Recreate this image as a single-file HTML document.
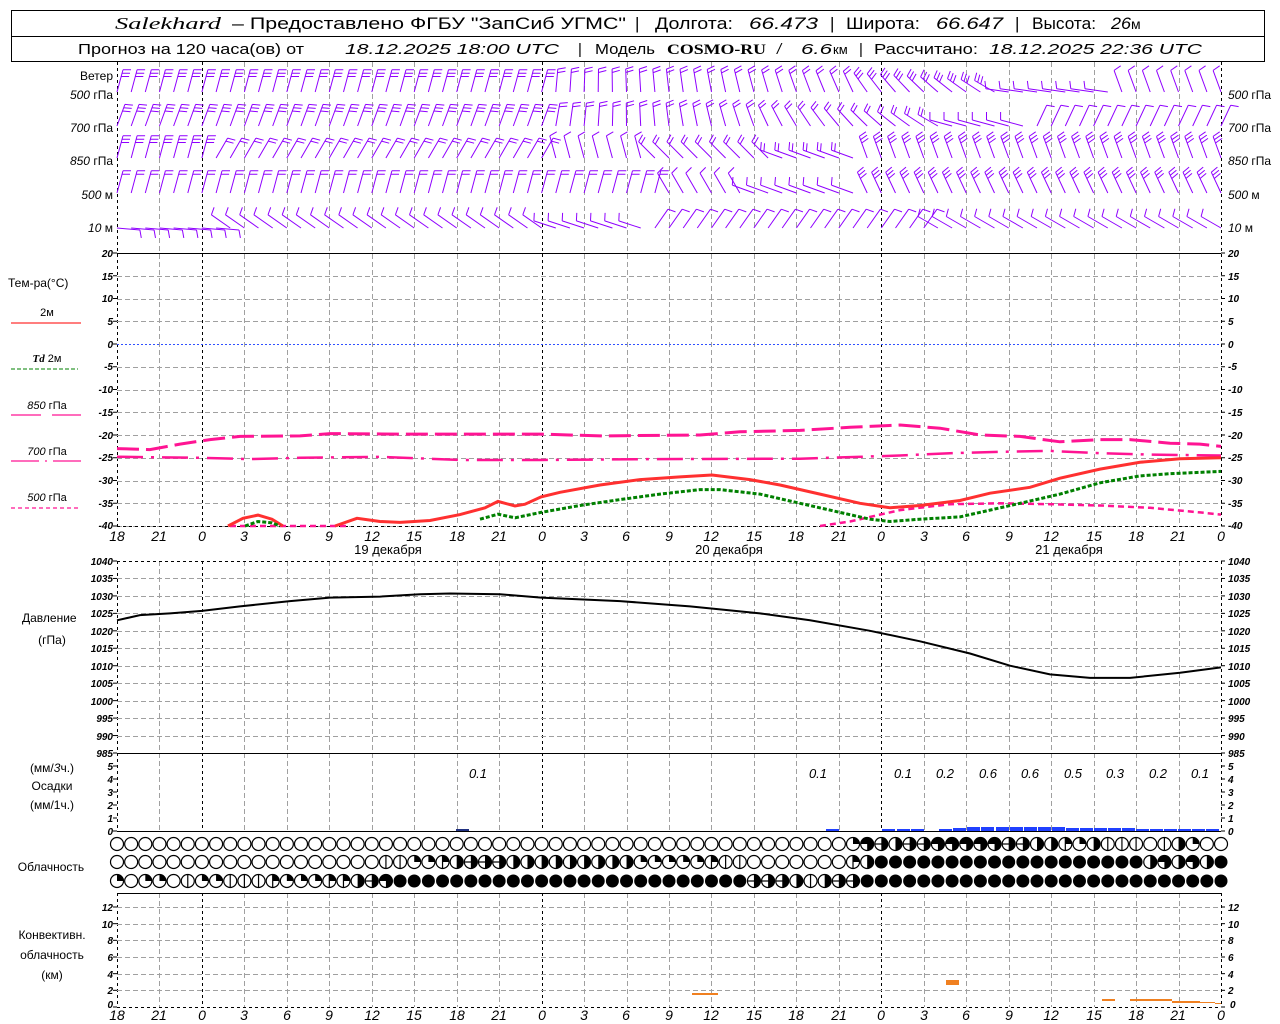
<!DOCTYPE html>
<html><head><meta charset="utf-8">
<style>
html,body{margin:0;padding:0;background:#fff;}
svg{display:block;}
text{font-family:"Liberation Sans","DejaVu Sans",sans-serif;fill:#000;}
.i{font-style:italic;}
.ax{font-size:10px;font-style:italic;font-weight:bold;}
.lb{font-size:12px;}
</style></head>
<body>
<svg id="s" width="1280" height="1024" viewBox="0 0 1280 1024" xmlns="http://www.w3.org/2000/svg">
<rect x="0" y="0" width="1280" height="1024" fill="#fff"/>
<rect x="11.5" y="10.5" width="1253" height="51" fill="none" stroke="#000"/>
<line x1="11" y1="36.5" x2="1265" y2="36.5" stroke="#000"/>
<g font-size="17">
<text x="115" y="29" textLength="106" lengthAdjust="spacingAndGlyphs" style="font-family:'Liberation Serif',serif;font-style:italic">Salekhard</text>
<text x="232" y="29" textLength="394" lengthAdjust="spacingAndGlyphs">– Предоставлено ФГБУ "ЗапСиб УГМС"</text>
<text x="635" y="29">|</text>
<text x="655" y="29" textLength="78" lengthAdjust="spacingAndGlyphs">Долгота:</text>
<text x="749" y="29" class="i" textLength="69" lengthAdjust="spacingAndGlyphs">66.473</text>
<text x="830" y="29">|</text>
<text x="846" y="29" textLength="74" lengthAdjust="spacingAndGlyphs">Широта:</text>
<text x="936" y="29" class="i" textLength="67" lengthAdjust="spacingAndGlyphs">66.647</text>
<text x="1015" y="29">|</text>
<text x="1032" y="29" textLength="64" lengthAdjust="spacingAndGlyphs">Высота:</text>
<text x="1111" y="29" class="i" textLength="20" lengthAdjust="spacingAndGlyphs">26</text>
<text x="1131" y="29" font-size="14">м</text>
</g>
<g font-size="15">
<text x="78" y="54" textLength="226" lengthAdjust="spacingAndGlyphs">Прогноз на 120 часа(ов) от</text>
<text x="345" y="54" class="i" textLength="214" lengthAdjust="spacingAndGlyphs">18.12.2025 18:00 UTC</text>
<text x="578" y="54">|</text>
<text x="595" y="54" textLength="60" lengthAdjust="spacingAndGlyphs">Модель</text>
<text x="667" y="54" textLength="99" lengthAdjust="spacingAndGlyphs" style="font-family:'Liberation Serif',serif;font-weight:bold">COSMO-RU</text>
<text x="777" y="54" class="i">/</text>
<text x="801" y="54" class="i" textLength="31" lengthAdjust="spacingAndGlyphs">6.6</text>
<text x="833" y="54" font-size="13">км</text>
<text x="859" y="54">|</text>
<text x="874" y="54" textLength="104" lengthAdjust="spacingAndGlyphs">Рассчитано:</text>
<text x="989" y="54" class="i" textLength="213" lengthAdjust="spacingAndGlyphs">18.12.2025 22:36 UTC</text>
</g>
<g id="gfx"></g>
<g class="lb" font-size="11">
<text x="113" y="80" text-anchor="end">Ветер</text>
<text x="113" y="99" text-anchor="end"><tspan class="i">500</tspan> гПа</text>
<text x="113" y="132" text-anchor="end"><tspan class="i">700</tspan> гПа</text>
<text x="113" y="165" text-anchor="end"><tspan class="i">850</tspan> гПа</text>
<text x="113" y="199" text-anchor="end"><tspan class="i">500</tspan> м</text>
<text x="113" y="232" text-anchor="end"><tspan class="i">10</tspan>  м</text>
<text x="1228" y="99"><tspan class="i">500</tspan> гПа</text>
<text x="1228" y="132"><tspan class="i">700</tspan> гПа</text>
<text x="1228" y="165"><tspan class="i">850</tspan> гПа</text>
<text x="1228" y="199"><tspan class="i">500</tspan> м</text>
<text x="1228" y="232"><tspan class="i">10</tspan>   м</text>
</g>
<g font-size="12">
<text x="8" y="287">Тем-ра(°С)</text>
<text x="47" y="316" text-anchor="middle" font-size="11">2м</text>
<text x="47" y="362" text-anchor="middle" font-size="11"><tspan class="i" font-weight="bold" style="font-family:'Liberation Serif',serif">Td</tspan>  2м</text>
<text x="47" y="409" text-anchor="middle" font-size="11"><tspan class="i">850</tspan> гПа</text>
<text x="47" y="455" text-anchor="middle" font-size="11"><tspan class="i">700</tspan> гПа</text>
<text x="47" y="501" text-anchor="middle" font-size="11"><tspan class="i">500</tspan> гПа</text>
</g>
<line x1="11" y1="323" x2="81" y2="323" stroke="#ff3030" stroke-width="1.2"/>
<line x1="11" y1="369" x2="78" y2="369" stroke="#008000" stroke-dasharray="4,2"/>
<line x1="11" y1="415" x2="41" y2="415" stroke="#ff1493" stroke-width="1.2"/>
<line x1="52" y1="415" x2="81" y2="415" stroke="#ff1493" stroke-width="1.2"/>
<line x1="11" y1="461" x2="81" y2="461" stroke="#ff1493" stroke-dasharray="28,6,2,6" stroke-width="1.2"/>
<line x1="11" y1="508" x2="78" y2="508" stroke="#ff1493" stroke-dasharray="4,3" stroke-width="1.2"/>
<g class="ax">
<text x="113" y="257" text-anchor="end">20</text><text x="113" y="280" text-anchor="end">15</text><text x="113" y="302" text-anchor="end">10</text><text x="113" y="325" text-anchor="end">5</text><text x="113" y="348" text-anchor="end">0</text><text x="113" y="370" text-anchor="end">-5</text><text x="113" y="393" text-anchor="end">-10</text><text x="113" y="416" text-anchor="end">-15</text><text x="113" y="439" text-anchor="end">-20</text><text x="113" y="461" text-anchor="end">-25</text><text x="113" y="484" text-anchor="end">-30</text><text x="113" y="507" text-anchor="end">-35</text><text x="113" y="529" text-anchor="end">-40</text>
<text x="1228" y="257">20</text><text x="1228" y="280">15</text><text x="1228" y="302">10</text><text x="1228" y="325">5</text><text x="1228" y="348">0</text><text x="1228" y="370">-5</text><text x="1228" y="393">-10</text><text x="1228" y="416">-15</text><text x="1228" y="439">-20</text><text x="1228" y="461">-25</text><text x="1228" y="484">-30</text><text x="1228" y="507">-35</text><text x="1228" y="529">-40</text>
</g>
<g class="i" font-size="14" text-anchor="middle">
<text x="117" y="541">18</text><text x="159" y="541">21</text><text x="202" y="541">0</text><text x="244" y="541">3</text><text x="287" y="541">6</text><text x="329" y="541">9</text><text x="372" y="541">12</text><text x="414" y="541">15</text><text x="457" y="541">18</text><text x="499" y="541">21</text><text x="542" y="541">0</text><text x="584" y="541">3</text><text x="626" y="541">6</text><text x="669" y="541">9</text><text x="711" y="541">12</text><text x="754" y="541">15</text><text x="796" y="541">18</text><text x="839" y="541">21</text><text x="881" y="541">0</text><text x="924" y="541">3</text><text x="966" y="541">6</text><text x="1009" y="541">9</text><text x="1051" y="541">12</text><text x="1094" y="541">15</text><text x="1136" y="541">18</text><text x="1178" y="541">21</text><text x="1221" y="541">0</text>
</g>
<g font-size="13" text-anchor="middle">
<text x="388" y="554">19 декабря</text><text x="729" y="554">20 декабря</text><text x="1069" y="554">21 декабря</text>
</g>
<g font-size="12">
<text x="22" y="622">Давление</text>
<text x="52" y="644" text-anchor="middle">(гПа)</text>
</g>
<g class="ax" font-size="9">
<text x="113" y="565" text-anchor="end">1040</text><text x="113" y="582" text-anchor="end">1035</text><text x="113" y="600" text-anchor="end">1030</text><text x="113" y="617" text-anchor="end">1025</text><text x="113" y="635" text-anchor="end">1020</text><text x="113" y="652" text-anchor="end">1015</text><text x="113" y="670" text-anchor="end">1010</text><text x="113" y="687" text-anchor="end">1005</text><text x="113" y="705" text-anchor="end">1000</text><text x="113" y="722" text-anchor="end">995</text><text x="113" y="740" text-anchor="end">990</text><text x="113" y="757" text-anchor="end">985</text>
<text x="1228" y="565">1040</text><text x="1228" y="582">1035</text><text x="1228" y="600">1030</text><text x="1228" y="617">1025</text><text x="1228" y="635">1020</text><text x="1228" y="652">1015</text><text x="1228" y="670">1010</text><text x="1228" y="687">1005</text><text x="1228" y="705">1000</text><text x="1228" y="722">995</text><text x="1228" y="740">990</text><text x="1228" y="757">985</text>
</g>
<g font-size="12" text-anchor="middle">
<text x="52" y="772">(мм/<tspan class="i">3</tspan>ч.)</text>
<text x="52" y="790">Осадки</text>
<text x="52" y="809">(мм/1ч.)</text>
<text x="51" y="871">Облачность</text>
<text x="52" y="939">Конвективн.</text>
<text x="52" y="959">облачность</text>
<text x="52" y="979">(км)</text>
</g>
<g class="ax" font-size="9">
<text x="113" y="770" text-anchor="end">5</text><text x="113" y="783" text-anchor="end">4</text><text x="113" y="796" text-anchor="end">3</text><text x="113" y="809" text-anchor="end">2</text><text x="113" y="822" text-anchor="end">1</text><text x="113" y="835" text-anchor="end">0</text>
<text x="1228" y="770">5</text><text x="1228" y="783">4</text><text x="1228" y="796">3</text><text x="1228" y="809">2</text><text x="1228" y="822">1</text><text x="1228" y="835">0</text>
<text x="113" y="911" text-anchor="end">12</text><text x="113" y="928" text-anchor="end">10</text><text x="113" y="944" text-anchor="end">8</text><text x="113" y="961" text-anchor="end">6</text><text x="113" y="978" text-anchor="end">4</text><text x="113" y="994" text-anchor="end">2</text><text x="113" y="1008" text-anchor="end">0</text>
<text x="1228" y="911">12</text><text x="1228" y="928">10</text><text x="1228" y="944">8</text><text x="1228" y="961">6</text><text x="1228" y="978">4</text><text x="1228" y="994">2</text><text x="1230" y="1008">0</text>
</g>
<g class="i" font-size="13" text-anchor="middle">
<text x="478" y="778">0.1</text><text x="818" y="778">0.1</text><text x="903" y="778">0.1</text><text x="945" y="778">0.2</text><text x="988" y="778">0.6</text><text x="1030" y="778">0.6</text><text x="1073" y="778">0.5</text><text x="1115" y="778">0.3</text><text x="1158" y="778">0.2</text><text x="1200" y="778">0.1</text>
</g>
<g class="i" font-size="14" text-anchor="middle">
<text x="117" y="1020">18</text><text x="159" y="1020">21</text><text x="202" y="1020">0</text><text x="244" y="1020">3</text><text x="287" y="1020">6</text><text x="329" y="1020">9</text><text x="372" y="1020">12</text><text x="414" y="1020">15</text><text x="457" y="1020">18</text><text x="499" y="1020">21</text><text x="542" y="1020">0</text><text x="584" y="1020">3</text><text x="626" y="1020">6</text><text x="669" y="1020">9</text><text x="711" y="1020">12</text><text x="754" y="1020">15</text><text x="796" y="1020">18</text><text x="839" y="1020">21</text><text x="881" y="1020">0</text><text x="924" y="1020">3</text><text x="966" y="1020">6</text><text x="1009" y="1020">9</text><text x="1051" y="1020">12</text><text x="1094" y="1020">15</text><text x="1136" y="1020">18</text><text x="1178" y="1020">21</text><text x="1221" y="1020">0</text>
</g>
</svg>
<script>
(function(){
var g=document.getElementById("gfx"),h="";
function X(k){return 117+k*42.4615;}
function ln(x1,y1,x2,y2,st){h+='<line x1="'+x1+'" y1="'+y1+'" x2="'+x2+'" y2="'+y2+'" '+st+'/>';}
var GR='stroke="#a0a0a0" stroke-dasharray="5,3"',BK='stroke="#000" stroke-dasharray="3,3"';
var ranges=[[62,526],[561,831],[893,1007]];
ranges.forEach(function(r){
 for(var k=0;k<=26;k++){var x=Math.round(X(k))+.5;
  var day=(k==0||k==2||k==10||k==18||k==26);
  ln(x,r[0],x,r[1],day?BK:GR);}
});
for(var k=1;k<13;k++){var y=Math.round(253+k*22.75)+.5; if(k==4)continue; ln(117,y,1221,y,GR);}
ln(117,344.5,1221,344.5,'stroke="#3050ff" stroke-dasharray="2,2"');
ln(117,526.5,1221,526.5,BK);
ln(117,253.5,1221,253.5,'stroke="#000"');
ln(117,561.5,1221,561.5,BK);
for(var k=1;k<11;k++){var y=Math.round(561+k*17.45)+.5; ln(117,y,1221,y,GR);}
ln(117,753.5,1221,753.5,'stroke="#000"');
ln(117,831.5,1221,831.5,'stroke="#000"');
ln(117,893.5,1221,893.5,'stroke="#000"');
for(var k=1;k<=6;k++){var y=Math.round(1007-k*16.67)+.5; ln(117,y,1221,y,GR);}
ln(117,1007.5,1221,1007.5,BK);
[[253,526,13],[561,753,12],[766,831,6],[907,1007,7]].forEach(function(t){
 for(var i=0;i<t[2];i++){var y=t[0]+(t[1]-t[0])*i/(t[2]-1);ln(113,y,117,y,'stroke="#000"');ln(1221,y,1225,y,'stroke="#000"');}});
function poly(pts,fy,st){var s="";pts.forEach(function(p,i){s+=(i?"L":"M")+p[0]+" "+fy(p[1]).toFixed(1);});h+='<path d="'+s+'" fill="none" '+st+'/>';}
var TY=function(t){return 344-4.55*t;};
poly([[117,-23],[150,-23.2],[180,-22],[210,-21],[240,-20.3],[300,-20.2],[330,-19.7],[400,-19.8],[540,-19.8],[600,-20.2],[700,-20],[740,-19.3],[800,-19],[850,-18.3],[900,-17.8],[940,-18.5],[980,-20],[1020,-20.3],[1060,-21.5],[1100,-21],[1130,-21],[1170,-21.8],[1200,-22],[1221,-22.5]],TY,'stroke="#ff1493" stroke-width="3" stroke-dasharray="22,7"');
poly([[117,-24.8],[200,-25],[250,-25.3],[300,-25],[380,-24.8],[460,-25.5],[540,-25.5],[650,-25.3],[800,-25.2],[900,-24.5],[950,-24],[1000,-23.7],[1050,-23.5],[1100,-24],[1150,-24.3],[1221,-24.5]],TY,'stroke="#ff1493" stroke-width="2.5" stroke-dasharray="26,8,3,8"');
poly([[230,-40],[350,-40]],TY,'stroke="#ff1493" stroke-width="2.5" stroke-dasharray="6,4"');
poly([[820,-40],[850,-39],[900,-36.5],[950,-35.2],[1000,-35],[1050,-35.2],[1100,-35.5],[1150,-36],[1200,-37],[1221,-37.5]],TY,'stroke="#ff1493" stroke-width="2.5" stroke-dasharray="6,4"');
poly([[228,-40],[243,-38.3],[258,-37.6],[272,-38.5],[283,-40]],TY,'stroke="#ff3030" stroke-width="3"');
poly([[335,-40],[357,-38.3],[380,-39],[400,-39.2],[430,-38.8],[460,-37.5],[485,-36],[498,-34.6],[515,-35.6],[525,-35.2],[541,-33.6],[560,-32.6],[600,-31],[640,-29.8],[680,-29.2],[712,-28.8],[750,-29.8],[780,-31],[820,-33],[860,-35],[890,-36],[920,-35.5],[960,-34.4],[990,-32.8],[1030,-31.5],[1060,-29.5],[1100,-27.5],[1140,-26],[1180,-25.2],[1221,-25]],TY,'stroke="#ff3030" stroke-width="3"');
poly([[245,-40],[258,-39],[272,-39.3],[280,-40]],TY,'stroke="#008000" stroke-width="3" stroke-dasharray="4,2"');
poly([[480,-38.5],[498,-37.4],[515,-38.2],[541,-37],[580,-35.5],[620,-34.2],[660,-33],[700,-32],[720,-32],[760,-33],[800,-35],[840,-37],[870,-38.5],[890,-39],[920,-38.5],[960,-38],[990,-36.5],[1020,-35],[1060,-33],[1100,-30.5],[1140,-29],[1170,-28.5],[1221,-28]],TY,'stroke="#008000" stroke-width="3" stroke-dasharray="4,2"');
var PY=function(p){return 561+(1040-p)*3.49;};
poly([[117,1023],[140,1024.5],[170,1025],[202,1025.7],[240,1027],[290,1028.5],[330,1029.5],[380,1029.8],[420,1030.5],[450,1030.7],[500,1030.5],[541,1029.5],[620,1028.5],[690,1027],[760,1025],[810,1023],[870,1020],[920,1017],[970,1013.5],[1010,1010],[1050,1007.5],[1090,1006.5],[1130,1006.5],[1180,1008],[1221,1009.5]],PY,'stroke="#000" stroke-width="2"');
function rect(x,y,w,hh,c){h+='<rect x="'+x+'" y="'+y+'" width="'+w+'" height="'+hh+'" fill="'+c+'"/>';}
var B="#2040ff";
rect(456,829,13,2,"#203080");rect(826,829,13,2,B);
[[882,2],[897,2],[911,2],[939,2],[953,3],[967,4],[981,4],[996,4],[1010,4],[1024,4],[1038,4],[1052,4],[1066,3],[1080,3],[1094,3],[1108,3],[1122,3],[1136,2],[1150,2],[1164,2],[1178,2],[1192,2],[1206,2]].forEach(function(b){rect(b[0],831-b[1],13,b[1],B);});
var O="#f08020";
rect(692,993,26,2,O);rect(946,980,13,5,O);rect(1102,999,13,2,O);rect(1130,999,42,2,O);rect(1172,1001,15,2,O);rect(1187,1001,13,2,O);rect(1200,1002,15,1,O);rect(1215,1003,6,1,O);
function pad(s,c){while(s.length<79)s+=c;return s;}
var rows=[
 pad("0000000000000000000000000000000000000000000000000000"+"13h2hh33333hh22q12vvv0v210","0"),
 pad("0000000000000000000"+"vv11q2hhh22222222"+"2111"+"11q"+"vv"+"0000000"+"q2"+"4444444444444444444"+"23232"+"4","4"),
 pad("1011"+"0v11vvvq111qq2h3"+"4444444444444444444444444"+"hhh2v2hh"+"4444444444444444444444444","4")
];
var cy=[844,862,881],R=6.5;
rows.forEach(function(r,ri){
 for(var i=0;i<79;i++){var cx=117+i*14.154,y=cy[ri],c=r[i];
  var p="";
  if(c=="4"){h+='<circle cx="'+cx+'" cy="'+y+'" r="'+R+'" fill="#000"/>';continue;}
  h+='<circle cx="'+cx+'" cy="'+y+'" r="'+R+'" fill="#fff" stroke="#000" stroke-width="1.2"/>';
  if(c=="1"||c=="q")p='M'+cx+' '+y+'V'+(y-R)+'A'+R+' '+R+' 0 0 1 '+(cx+R)+' '+y+'Z';
  if(c=="2"||c=="h")p='M'+cx+' '+(y-R)+'A'+R+' '+R+' 0 0 1 '+cx+' '+(y+R)+'Z';
  if(c=="3")p='M'+cx+' '+y+'H'+(cx-R)+'A'+R+' '+R+' 0 1 1 '+cx+' '+(y+R)+'Z';
  if(p)h+='<path d="'+p+'" fill="#000"/>';
  if(c=="v"||c=="q")ln(cx,y-R,cx,y+R,'stroke="#000" stroke-width="1.2"');
  if(c=="h")ln(cx-R,y,cx+R,y,'stroke="#000" stroke-width="1.2"');
 }
});
var P="#8f00ff";
function barb(x,y,th,n){var a=th*Math.PI/180,dx=Math.sin(a),dy=-Math.cos(a),L=23;
 var tx=x+dx*L,ty=y+dy*L,s='M'+x.toFixed(1)+' '+y+'L'+tx.toFixed(1)+' '+ty.toFixed(1);
 var b=(th+75)*Math.PI/180,bx=Math.sin(b)*8,by=-Math.cos(b)*8;
 for(var j=0;j<n;j++){var px=tx-dx*j*3.5,py=ty-dy*j*3.5;s+='M'+px.toFixed(1)+' '+py.toFixed(1)+'l'+bx.toFixed(1)+' '+by.toFixed(1);}
 h+='<path d="'+s+'" fill="none" stroke="'+P+'" stroke-width="1"/>';}
function lerp(a,b,t){return a+(b-a)*t;}
var spec=[
 [92,function(i){if(i<=30)return[15,3];if(i<=52)return[lerp(5,-25,(i-31)/21),2];if(i<=62)return[lerp(-35,-60,(i-53)/9),3];if(i<=70)return[-82,1];return[-20,1];}],
 [126,function(i){if(i<=30)return[20,3];if(i<=45)return[lerp(10,-20,(i-31)/14),2];if(i<=58)return[lerp(-25,-60,(i-46)/12),2];if(i<=64)return[-75,1];return[25,1];}],
 [158,function(i){if(i<=6)return[15,3];if(i<=30)return[30,2];if(i<=37)return[-15,1];if(i<=46)return[-45,2];if(i<=52)return[-70,2];return[-20,3];}],
 [193,function(i){if(i<=38)return[15,2];if(i<=44)return[-30,1];if(i<=52)return[-70,1];return[-25,3];}],
 [228,function(i){if(i<=7)return[95,1];if(i<=30)return[-55,1];if(i<=37)return[-72,1];if(i<=57)return[35,1];return[-60,1];}]
];
spec.forEach(function(sp){for(var i=0;i<79;i++){var v=sp[1](i);barb(117+i*14.154,sp[0],v[0],v[1]);}});
g.innerHTML=h;
})();
</script>
</body></html>
